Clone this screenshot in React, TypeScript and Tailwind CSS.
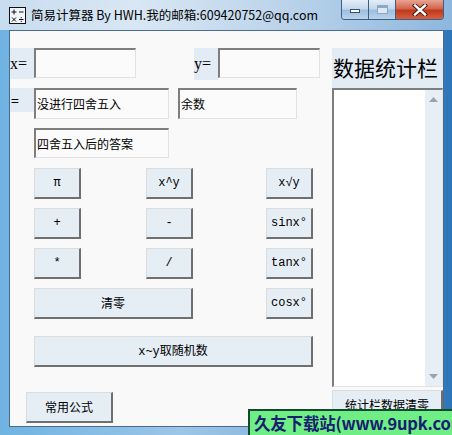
import React from "react";

const cjk = { fontFamily: '"Noto Sans CJK SC", "Liberation Sans", sans-serif' };
const ser = { fontFamily: '"Liberation Serif", "Noto Sans CJK SC", serif' };
const mono = { fontFamily: '"Liberation Mono", "Noto Sans CJK SC", monospace' };

const btn =
  "flex items-center justify-center bg-[#e5edf5] border-t border-l border-r-2 border-b-2 border-t-[#dcdcdc] border-l-[#dcdcdc] border-r-[#6f6f6f] border-b-[#6f6f6f] text-[12px] text-black";
const inp =
  "flex items-center bg-[#fbfbfb] border-t-2 border-l-2 border-r border-b border-t-[#7e7e7e] border-l-[#7e7e7e] border-r-[#e2e2e2] border-b-[#e2e2e2] text-[12px] text-black pl-[1px]";
const lbl = "bg-[#e3ecf5] flex items-center text-black";

function Btn({ w, label, font = mono }: { w: string; label: React.ReactNode; font?: React.CSSProperties }) {
  return (
    <div className={`${btn} ${w} h-[31px]`} style={font}>
      {label}
    </div>
  );
}

export default function App() {
  return (
    <div className="relative w-[452px] h-[435px] overflow-hidden bg-[linear-gradient(90deg,#6fb3e2_0%,#9cc6e8_40%,#7fb0db_75%,#2c74b8_100%)]">
      {/* title bar */}
      <div className="h-[30px] flex items-center bg-[linear-gradient(90deg,#c8dcef_0%,#d9e7f4_30%,#b9d2ea_65%,#8db7de_100%)]">
        <svg width="17" height="17" viewBox="0 0 17 17" className="ml-[9px] mt-[1px]">
          <rect x="0.5" y="0.5" width="16" height="16" fill="#f2f6fa" stroke="#111" />
          <path d="M2.5 5h5M5 2.5v5M10 5h4.5M3 10.5l4 4M7 10.5l-4 4M10 12.5h4.5" stroke="#111" strokeWidth="1" />
          <rect x="11.7" y="10.2" width="1.1" height="1.1" fill="#111" />
          <rect x="11.7" y="13.8" width="1.1" height="1.1" fill="#111" />
        </svg>
        <span className="ml-[5px] text-[12.5px] text-black leading-none" style={cjk}>
          简易计算器 By HWH.我的邮箱:609420752@qq.com
        </span>
      </div>
      {/* caption buttons */}
      <div className="absolute left-[341px] top-0 flex h-[20px] rounded-b-[4px] overflow-hidden border border-t-0 border-[#3f5f82]">
        <div className="w-[27px] h-full bg-[linear-gradient(180deg,#e3edf7_0%,#c4d8ec_45%,#9fbfdf_55%,#b8d3ec_100%)] border-r border-[#3f5f82] flex items-center justify-center">
          <div className="w-[10px] h-[4px] bg-white border border-[#35506e] mt-[3px]" />
        </div>
        <div className="w-[27px] h-full bg-[linear-gradient(180deg,#e3edf7_0%,#c4d8ec_45%,#9fbfdf_55%,#b8d3ec_100%)] border-r border-[#3f5f82] flex items-center justify-center">
          <div className="w-[11px] h-[9px] border border-[#8fa8c2] border-t-[3px] bg-[#dfe8f2]" />
        </div>
        <div className="w-[47px] h-full bg-[linear-gradient(180deg,#e8a493_0%,#d4654c_45%,#c1391d_55%,#d6603f_100%)] flex items-center justify-center">
          <svg width="16" height="12" viewBox="0 0 16 12">
            <path d="M3 1.5l10 9M13 1.5l-10 9" stroke="#3a1a14" strokeWidth="4.2" strokeLinecap="square" />
            <path d="M3 1.5l10 9M13 1.5l-10 9" stroke="#fff" strokeWidth="2.4" strokeLinecap="square" />
          </svg>
        </div>
      </div>
      {/* client area */}
      <div className="ml-[9px] w-[435px] h-[397px] border border-[#4b6b8d] bg-[#f9f9f9] flex overflow-hidden">
        {/* left column */}
        <div className="w-[320px] flex flex-col pt-[17px]">
          <div className="flex items-start h-[31px]">
            <div className={`${lbl} w-[24px] h-[31px] text-[16px]`} style={ser}>x=</div>
            <div className={`${inp} w-[102px] h-[30px]`} />
            <div className={`${lbl} w-[24px] h-[32px] text-[16px] ml-[58px]`} style={ser}>y=</div>
            <div className={`${inp} w-[102px] h-[30px]`} />
          </div>
          <div className="flex items-start mt-[9px]">
            <div className={`${lbl} w-[24px] h-[24px] text-[14px] pl-[1px]`} style={cjk}>=</div>
            <div className={`${inp} w-[135px] h-[31px]`} style={cjk}>没进行四舍五入</div>
            <div className={`${inp} w-[119px] h-[31px] ml-[9px]`} style={cjk}>余数</div>
          </div>
          <div className="flex mt-[9px] pl-[24px]">
            <div className={`${inp} w-[135px] h-[30px]`} style={cjk}>四舍五入后的答案</div>
          </div>
          <div className="grid grid-cols-[112px_120px_47px] gap-y-[9px] mt-[10px] ml-[24px]">
            <Btn w="w-[47px]" label="π" />
            <Btn w="w-[47px]" label="x^y" />
            <Btn w="w-[47px]" label="x√y" />
            <Btn w="w-[47px]" label="+" />
            <Btn w="w-[47px]" label="-" />
            <Btn w="w-[47px]" label="sinx°" />
            <Btn w="w-[47px]" label="*" />
            <Btn w="w-[47px]" label="/" />
            <Btn w="w-[47px]" label="tanx°" />
            <div className="col-span-2">
              <Btn w="w-[159px]" label="清零" font={cjk} />
            </div>
            <Btn w="w-[47px]" label="cosx°" />
          </div>
          <div className="mt-[17px] ml-[24px]">
            <Btn w="w-[279px]" label={<span><span style={mono}>x~y</span>取随机数</span>} font={cjk} />
          </div>
          <div className="mt-[25px] ml-[16px]">
            <Btn w="w-[87px]" label="常用公式" font={cjk} />
          </div>
        </div>
        {/* right column */}
        <div className="w-[111px] ml-[10px] flex flex-col pt-[17px]">
          <div className={`${lbl} h-[40px] text-[21px] pl-[1px]`} style={cjk}>数据统计栏</div>
          <div className="h-[302px] flex bg-white border-t-2 border-l-2 border-r border-b border-t-[#7e7e7e] border-l-[#7e7e7e] border-r-[#e2e2e2] border-b-[#e2e2e2]">
            <div className="flex-1" />
            <div className="w-[17px] bg-[#e8eef5] flex flex-col items-center justify-between py-[7px]">
              <svg width="9" height="5" viewBox="0 0 9 5"><path d="M0 5L4.5 0L9 5Z" fill="#9aa3ad" /></svg>
              <svg width="9" height="5" viewBox="0 0 9 5"><path d="M0 0L4.5 5L9 0Z" fill="#9aa3ad" /></svg>
            </div>
          </div>
          <div className="mt-[3px]">
            <div className={`${btn} w-[111px] h-[36px] items-start pt-[5px]`} style={cjk}>统计栏数据清零</div>
          </div>
        </div>
      </div>
      {/* watermark */}
      <div className="absolute left-[248px] top-[409px] w-[206px] h-[28px] bg-[#70ee86] border-2 border-[#144a2c] flex items-center pl-[4px]">
        <span className="text-[16.5px] font-bold text-[#15206e] whitespace-nowrap tracking-[-0.2px]" style={{ fontFamily: '"Noto Sans CJK SC", "Liberation Sans", sans-serif' }}>
          久友下载站(www.9upk.com)
        </span>
      </div>
    </div>
  );
}
